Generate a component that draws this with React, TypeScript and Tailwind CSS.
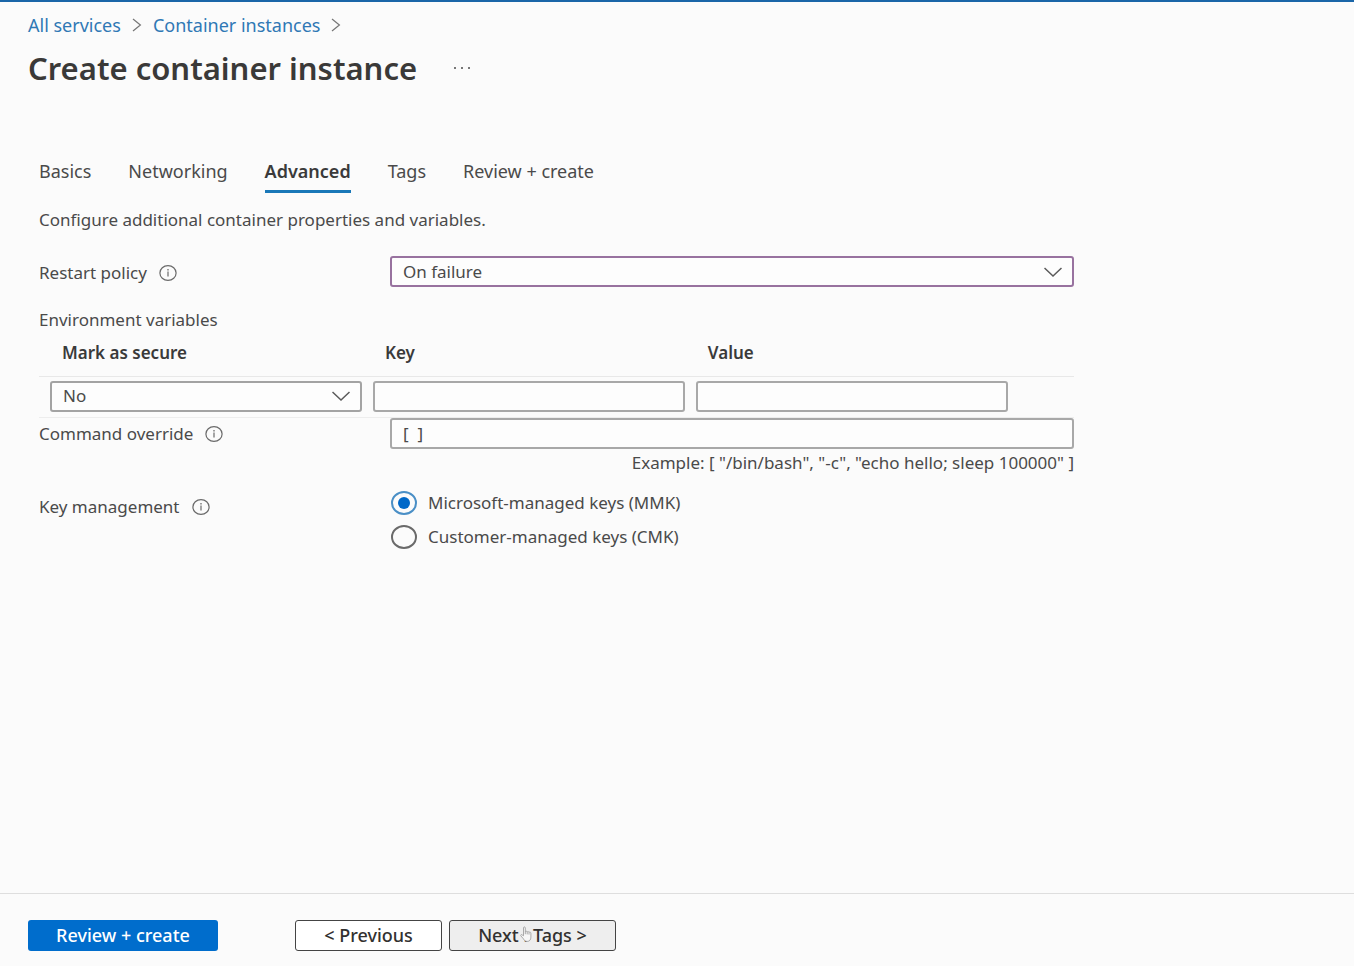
import { useState } from "react";

const tabs = ["Basics", "Networking", "Advanced", "Tags", "Review + create"];

function InfoIcon() {
  return (
    <svg className="h-4 w-[18px] shrink-0" viewBox="0 0 18 16" fill="none" stroke="#6a6a6a" aria-hidden="true">
      <ellipse cx="9" cy="8" rx="8.1" ry="7.4" strokeWidth="1.2" />
      <path d="M9 6.6v4.8" strokeWidth="1.2" />
      <path d="M9 4.1v1.3" strokeWidth="1.3" />
    </svg>
  );
}

function Crumb() {
  return (
    <svg className="h-4 w-2.5" viewBox="0 0 10 16" fill="none" stroke="#767676" strokeWidth="1.2" aria-hidden="true">
      <path d="M1 2l7.4 6L1 14" />
    </svg>
  );
}

function Chevron() {
  return (
    <svg
      className="pointer-events-none absolute top-1/2 right-3 h-3 w-[18px] -translate-y-1/2"
      viewBox="0 0 18 12"
      fill="none"
      stroke="#5a5a5a"
      strokeWidth="1.5"
      aria-hidden="true"
    >
      <path d="M0.5 2l8.5 8 8.5-8" />
    </svg>
  );
}

function HandPointer() {
  return (
    <svg
      className="pointer-events-none absolute top-[5px] left-[70px] h-4 w-3"
      viewBox="0 0 12 16"
      fill="#f7f7f7"
      stroke="#a0a0a0"
      strokeWidth="0.9"
      strokeLinejoin="round"
      aria-hidden="true"
    >
      <path d="M3.5 9.8V2c0-1.5 1.8-1.5 1.8 0v3.8c.2-.9 1.8-.8 1.9.2.3-.7 1.7-.6 1.8.4.5-.6 1.9-.3 1.9.7v4c0 2.6-1.3 4.3-3.7 4.3-2 0-2.9-.9-3.7-2.5L.8 9.8c-.5-1 .6-1.6 1.3-.9z" />
      <path d="M5.3 5.6v2.6M7.2 6v2.4M9 6.4v2.2" />
    </svg>
  );
}

const field = "block h-[31px] w-full rounded-[3px] border-2 bg-[#fdfdfd] px-[11px] outline-none";

export default function App() {
  const [tab, setTab] = useState("Advanced");
  const [keys, setKeys] = useState("mmk");
  const [command, setCommand] = useState("[  ]");

  return (
    <div className="flex min-h-screen flex-col border-t-2 border-[#1a66a8] bg-[#fbfbfb] font-['Noto_Sans',sans-serif] text-[17px] leading-6 text-[#4a4a4a]">
      <header className="px-7 pt-[11px]">
        <nav aria-label="Breadcrumb" className="flex items-center gap-[11px] text-[18px] text-[#2f78b5]">
          <a href="#services">All services</a>
          <Crumb />
          <a href="#instances">Container instances</a>
          <Crumb />
        </nav>
        <div className="mt-[11px] flex items-center gap-9">
          <h1 className="text-[31px] leading-10 font-semibold text-[#3a3938]">Create container instance</h1>
          <button type="button" aria-label="More options" className="flex w-[18px] justify-between px-px">
            <span className="size-0.5 bg-[#777]" />
            <span className="size-0.5 bg-[#777]" />
            <span className="size-0.5 bg-[#777]" />
          </button>
        </div>
      </header>

      <main className="flex-1 px-[39px] pt-[71px]">
        <div role="tablist" className="flex gap-[37px] text-[18px]">
          {tabs.map((t) => (
            <button
              key={t}
              type="button"
              role="tab"
              aria-selected={tab === t}
              onClick={() => setTab(t)}
              className={
                tab === t
                  ? "border-b-[3px] border-[#1a78b8] pb-[7px] font-semibold text-[#3a3a3a]"
                  : "border-b-[3px] border-transparent pb-[7px]"
              }
            >
              {t}
            </button>
          ))}
        </div>

        <div className="max-w-[1035px]">
          <p className="mt-[15px]">Configure additional container properties and variables.</p>

          <div className="mt-6 flex items-center">
            <div className="flex w-[351px] shrink-0 items-center gap-3 pt-0.5">
              <label htmlFor="restart">Restart policy</label>
              <InfoIcon />
            </div>
            <div className="relative flex-1">
              <select id="restart" className={`${field} appearance-none border-[#98729f]`}>
                <option>On failure</option>
              </select>
              <Chevron />
            </div>
          </div>

          <h2 className="mt-[21px]">Environment variables</h2>
          <table className="w-full table-fixed border-collapse">
            <thead>
              <tr className="h-11 border-b border-[#e8e8e8] text-left align-top text-[#3a3a3a]">
                <th className="w-[31.2%] pt-[9px] pl-[23px] font-semibold">Mark as secure</th>
                <th className="w-[31.2%] pt-[9px] pl-[23px] font-semibold">Key</th>
                <th className="w-[31.2%] pt-[9px] pl-[23px] font-semibold">Value</th>
                <td />
              </tr>
            </thead>
            <tbody>
              <tr className="border-b border-[#ededed]">
                <td className="pt-1 pb-[5px] pl-[11px]">
                  <div className="relative">
                    <select aria-label="Mark as secure" className={`${field} appearance-none border-[#a3a3a3]`}>
                      <option>No</option>
                    </select>
                    <Chevron />
                  </div>
                </td>
                <td className="pt-1 pb-[5px] pl-[11px]">
                  <input type="text" aria-label="Key" className={`${field} border-[#a8a8a8]`} />
                </td>
                <td className="pt-1 pb-[5px] pl-[11px]">
                  <input type="text" aria-label="Value" className={`${field} border-[#a8a8a8]`} />
                </td>
                <td />
              </tr>
            </tbody>
          </table>

          <div className="flex items-center">
            <div className="flex w-[351px] shrink-0 items-center gap-3 pt-0.5">
              <label htmlFor="command">Command override</label>
              <InfoIcon />
            </div>
            <input
              id="command"
              type="text"
              value={command}
              onChange={(e) => setCommand(e.target.value)}
              className={`${field} border-[#a8a8a8]`}
            />
          </div>
          <p className="mt-0.5 text-right">Example: [ "/bin/bash", "-c", "echo hello; sleep 100000" ]</p>

          <div role="radiogroup" aria-labelledby="keys-label" className="mt-4 flex items-start">
            <div className="mt-1 flex w-[351px] shrink-0 items-center gap-3">
              <span id="keys-label">Key management</span>
              <InfoIcon />
            </div>
            <div className="flex flex-col gap-2.5 pl-px">
              {[
                { id: "mmk", label: "Microsoft-managed keys (MMK)" },
                { id: "cmk", label: "Customer-managed keys (CMK)" },
              ].map((k) => (
                <label key={k.id} className="flex items-center gap-[11px]">
                  <input
                    type="radio"
                    name="keys"
                    checked={keys === k.id}
                    onChange={() => setKeys(k.id)}
                    className="grid h-6 w-[26px] appearance-none place-items-center rounded-[50%] border-2 border-[#6a6a6a] before:h-3 before:w-3 before:rounded-[50%] checked:border-[#4a8fc6] checked:before:bg-[#0068c8]"
                  />
                  {k.label}
                </label>
              ))}
            </div>
          </div>
        </div>
      </main>

      <footer className="flex border-t border-[#dedede] px-7 pt-[26px] pb-[15px] text-[18px] font-medium text-[#323130]">
        <button type="button" className="h-[31px] w-[190px] rounded-[3px] bg-[#006dcc] pb-0.5 text-white">
          Review + create
        </button>
        <button type="button" className="ml-[77px] h-[31px] w-[147px] rounded-[3px] border border-[#444] bg-white pb-0.5">
          &lt; Previous
        </button>
        <button
          type="button"
          className="relative ml-[7px] h-[31px] w-[167px] rounded-[3px] border border-[#444] bg-[#eee] pb-0.5"
        >
          Next : Tags &gt;
          <HandPointer />
        </button>
      </footer>
    </div>
  );
}
